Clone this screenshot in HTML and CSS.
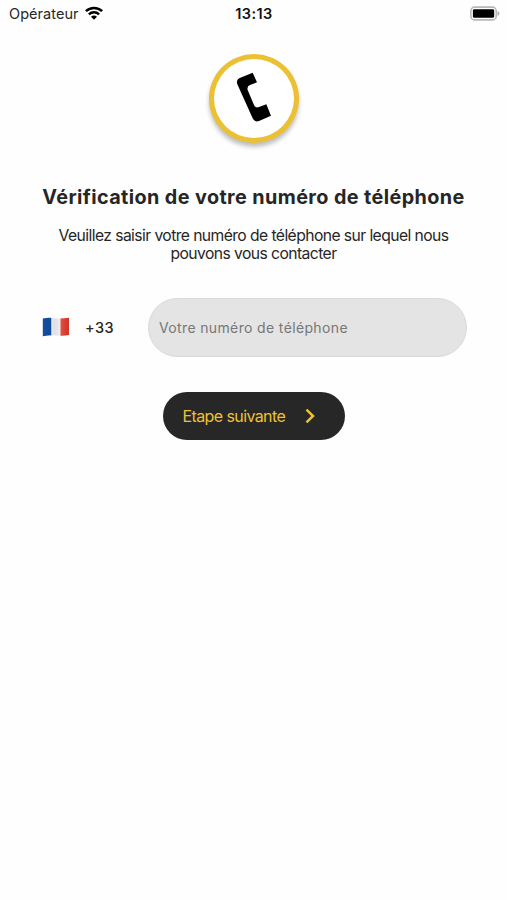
FILE: index.html
```html
<!DOCTYPE html>
<html lang="fr">
<head>
<meta charset="utf-8">
<title>Vérification du téléphone</title>
<link rel="stylesheet" href="styles.css">
</head>
<body>
<header class="status">
  <div class="carrier"><span class="carrier-name">Opérateur</span>
    <svg class="wifi" viewBox="0 0 18 14"><g fill="none" stroke="#000" stroke-width="2.5"><path d="M.9 5.2C5.4.8 12.6.8 17.1 5.2"/><path d="M3.9 8.4C6.8 5.6 11.2 5.6 14.1 8.4"/></g><path d="M6 10.7C7.7 9.1 10.3 9.1 12 10.7L9 13.7Z"/></svg>
  </div>
  <time class="clock">13:13</time>
  <div class="power"><svg class="battery" viewBox="0 0 31 15"><rect x=".9" y=".9" width="26.2" height="13.2" rx="3.8" fill="#fff" stroke="#b8b8b8" stroke-width="1.6"/><rect x="3" y="3" width="22" height="9" rx="1.5"/><path d="M28.5 5C31 6 31 9 28.5 10Z" fill="#aaa"/></svg></div>
</header>
<main class="screen">
  <div class="badge"><svg class="phone" viewBox="0 0 108 150"><path d="M50 2L63 31L42 39Q32 43 35 54L54 99Q58 109 69 105L91 97L105 131L69 147Q56 152 50 139L4 37Q-1 23 13 17Z"/></svg></div>
  <h1 class="title">Vérification de votre numéro de téléphone</h1>
  <p class="intro"><span class="line">Veuillez saisir votre numéro de téléphone sur lequel nous</span><span class="line">pouvons vous contacter</span></p>
  <form class="entry">
    <svg class="flag" viewBox="0 0 28 20"><defs><clipPath id="cloth"><path d="M.8 1.5Q7 .2 13 1.2T27 .8V18Q21 19.2 15 18.4T.8 19.2Z"/></clipPath><linearGradient id="fold"><stop offset="0" stop-color="#000" stop-opacity="0"/><stop offset=".45" stop-color="#000" stop-opacity=".07"/><stop offset=".7" stop-color="#fff" stop-opacity=".12"/><stop offset="1" stop-color="#000" stop-opacity=".06"/></linearGradient></defs><g clip-path="url(#cloth)"><path fill="#134f9e" d="M0 0h9.5v20H0z"/><path fill="#f2f3f5" d="M9.5 0h9v20h-9z"/><path fill="#df3428" d="M18.5 0H28v20h-9.5z"/><path fill="url(#fold)" d="M0 0h28v20H0z"/></g></svg>
    <span class="code">+33</span>
    <input class="number" type="tel" placeholder="Votre numéro de téléphone" aria-label="Votre numéro de téléphone">
  </form>
  <button class="next" type="button"><span class="next-label">Etape suivante</span><svg class="chevron" viewBox="0 0 10 16"><path d="M1.5 1.7L8 8L1.5 14.3" fill="none" stroke="#edc233" stroke-width="2.5"/></svg></button>
</main>
</body>
</html>
```
FILE: styles.css
```css
* { box-sizing: border-box; }
body { margin: 0; background: #fefefe; color: #262626; font-family: Inter, "Liberation Sans", sans-serif; }
.status { display: grid; grid-template-columns: 1fr auto 1fr; align-items: center; height: 26px; padding: 0 7px 0 9px; }
.carrier { display: flex; align-items: center; gap: 6px; font-size: 14.5px; letter-spacing: .05px; }
.wifi { width: 18px; height: 14px; }
.clock { margin-right: 1px; font-size: 14.5px; font-weight: 600; letter-spacing: .45px; color: #111; }
.power { display: flex; justify-content: flex-end; }
.battery { width: 30px; height: 15px; }
.screen { display: flex; flex-direction: column; align-items: center; padding-top: 28px; }
.badge { display: flex; align-items: center; justify-content: center; width: 90px; height: 89px; padding: 0 0 4px 1px; border: 5px solid #ebc033; border-radius: 50%; background: #fff; box-shadow: 0 4px 4px rgba(0, 0, 0, .25); }
.phone { width: 36px; height: 50px; }
.title { margin: 42px 0 0; font-size: 19.8px; line-height: 24px; font-weight: 650; letter-spacing: .4px; white-space: nowrap; }
.intro { display: flex; flex-direction: column; align-items: center; margin: 17px 0 0; font-size: 15.7px; line-height: 18px; letter-spacing: -.58px; padding: 1px 0 0; }
.line { white-space: nowrap; }
.entry { display: flex; align-items: center; align-self: stretch; margin: 35px 40px 0 42px; }
.flag { width: 28px; height: 20px; margin-bottom: 2px; }
.code { width: 63px; margin-left: 15px; font-size: 14.5px; font-weight: 500; letter-spacing: .4px; }
.number { flex: 1; min-width: 0; height: 59px; padding: 0 10px; border: 1px solid #d9d9d9; border-radius: 30px; background: #e4e4e4; font: 14px Inter, "Liberation Sans", sans-serif; letter-spacing: .36px; }
.number::placeholder { color: #777; opacity: 1; }
.next { display: flex; align-items: center; justify-content: space-between; width: 182px; height: 48px; margin-top: 35px; padding: 0 30px 0 20px; border: 0; border-radius: 24px; background: #272727; color: #edc233; font: 16px Inter, "Liberation Sans", sans-serif; letter-spacing: -.6px; }
.next-label { white-space: nowrap; }
.chevron { width: 10px; height: 16px; }
```
